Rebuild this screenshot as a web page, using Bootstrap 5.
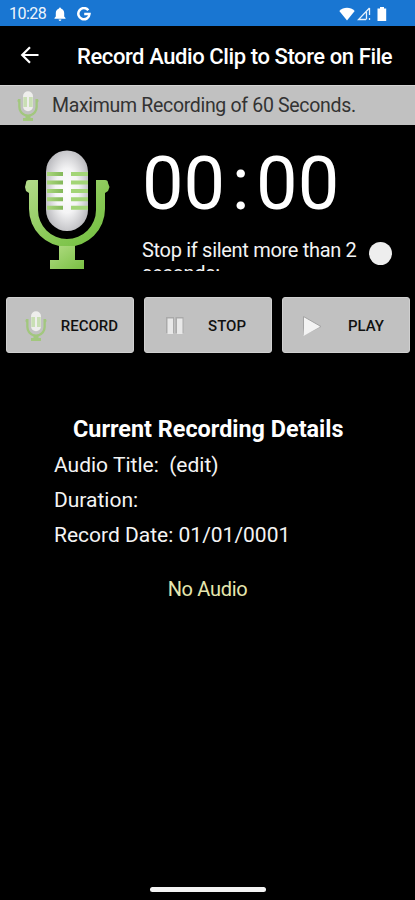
<!DOCTYPE html>
<html lang="en">
<head>
<meta charset="utf-8">
<meta name="viewport" content="width=device-width, initial-scale=1">
<title>Record Audio Clip</title>
<link href="https://cdn.jsdelivr.net/npm/bootstrap@5.3.0/dist/css/bootstrap.min.css" rel="stylesheet">
<style>
body{font-family:Roboto,"Liberation Sans",sans-serif;background:#000;color:#f4f4f4;height:900px;overflow:hidden;line-height:1.2}
svg{display:block;flex:none}
.statusbar{height:26px;background:#1976d2;font-size:16px;padding:2px 28px 0 9px;color:#eef5fc}
.clock{width:37px;letter-spacing:-.5px}
.toolbar{height:59px;padding-left:20px}
.toolbar h1{font-size:22px;font-weight:500;letter-spacing:-.41px;margin:3px 0 0 37px;white-space:nowrap;color:#fff}
.notice{height:40px;background:#c1c1c1;border-top:1px solid #d4d4d4;color:#333;font-size:19.5px;letter-spacing:-.32px;padding-left:17px}
.notice-text{padding:1px 0 0 13px}
.recorder{height:146px;padding:25px 0 0 25px}
.timer{font-size:74px;line-height:68px;height:66px;gap:6.5px;color:#fff;margin-left:3px}
.silent{font-size:20px;letter-spacing:-.31px;line-height:23px;height:32px;overflow:hidden;width:224px;margin:23px 0 0 3px}
.knob{width:23px;height:23px;background:#eee;margin:26px 0 0 3px}
.controls{padding:26px 5px 0 6px;gap:10px}
.controls .btn{flex:0 0 128px;height:56px;background:#c1c1c1;border:1px solid #d0d0d0;border-radius:3px;color:#111;font-size:15px;font-weight:500;padding:2px 15px 0 18px}
.controls .stop,.controls .play{padding-right:25px}
.details{padding:62px 0 0 54px;font-size:21px;line-height:34.8px}
.details h2{font-size:23.4px;font-weight:700;line-height:28px;margin:0 0 5px 19px;color:#fff}
.result{color:#e6e6ae;font-size:20px;letter-spacing:-.3px;line-height:24px;margin-top:25px}
.homebar{width:116px;height:5px;background:#f4f4f4;margin-bottom:8px}
</style>
</head>
<body class="d-flex flex-column">
<svg width="0" height="0" class="position-absolute" aria-hidden="true">
  <defs>
    <linearGradient id="green" x1="0" y1="0" x2="1" y2="1"><stop offset="0" stop-color="#b5dc8c"/><stop offset=".55" stop-color="#8ac957"/><stop offset="1" stop-color="#6fbd3c"/></linearGradient>
    <linearGradient id="foot" x1="0" y1="0" x2="1" y2="1"><stop offset="0" stop-color="#b2dc84"/><stop offset="1" stop-color="#79c043"/></linearGradient>
    <radialGradient id="silver" cx=".5" cy=".5" r=".55"><stop offset="0" stop-color="#fff"/><stop offset=".5" stop-color="#f4f4f5"/><stop offset="1" stop-color="#bcbcc0"/></radialGradient>
    <linearGradient id="bar" gradientUnits="userSpaceOnUse" x1="22" y1="0" x2="38" y2="0"><stop offset="0" stop-color="#a9d77b"/><stop offset="1" stop-color="#84b85a"/></linearGradient>
    <symbol id="mic" viewBox="0 0 86 120">
      <path fill="url(#green)" d="M4 30h9v30a29 29 0 0 0 58 0V30h9a3 3 0 0 1 3 3l1.500 4-1.500 4-3 2v16a38 38 0 0 1-76 0V43l-3-2-1-4 1-4a3 3 0 0 1 3-3z"/>
      <path fill="url(#foot)" d="M34 96h16v14h9v9H25v-9h9z"/>
      <rect x="21" y=".5" width="42" height="80.500" rx="21" fill="url(#silver)"/>
      <path fill="url(#bar)" d="M22 22h16v4H22zM22 30.500h16v4H22zM22 39h16v4H22zM22 47.300h16v4H22zM22 55.700h16v4H22z"/>
      <path fill="#a3d577" d="M46 22h17v4H46zM46 30.500h17v4H46zM46 39h17v4H46zM46 47.300h17v4H46zM46 55.700h17v4H46z"/>
    </symbol>
    <symbol id="mic-small" viewBox="0 0 22 30">
      <path fill="#a2c77e" d="M1 8h2.500v8a7.500 7.500 0 0 0 15 0V8H21l.6 2-.8 1.500V16a9.700 9.700 0 0 1-7.300 9.400V27h2.500v3H6v-3h2.500v-1.600A9.700 9.700 0 0 1 1.200 16v-4.500L.4 10z"/>
      <rect x="6" y=".3" width="10" height="20" rx="5" fill="#eeeeec"/>
      <path fill="#c9dfb4" d="M6.300 6h3.700v10H6.300zM12 6h3.700v10H12z"/>
    </symbol>
  </defs>
</svg>
<header>
  <div class="statusbar d-flex align-items-center">
    <span class="clock">10:28</span>
    <svg width="12" height="14" viewBox="0 0 12 14" style="margin-left:8px" fill="#fff"><path d="M5 1.500a1 1 0 0 1 2 0c2 .6 3.200 2.300 3.200 4.500v3.500L11.500 11v.8H.5V11l1.300-1.500V6C1.800 3.800 3 2.100 5 1.500zM4.600 12.500h2.800a1.400 1.400 0 0 1-2.800 0z"/></svg>
    <svg width="14" height="14" viewBox="0 0 14 14" style="margin-left:11px" fill="none" stroke="#fff" stroke-width="2.500"><path d="M11.300 3.200A5.600 5.600 0 1 0 12.500 7H7.200"/></svg>
    <svg width="16" height="14" viewBox="0 0 16 14" class="ms-auto" fill="#fff"><path d="M8 13.500.3 4C4.500-.3 11.500-.3 15.700 4z"/></svg>
    <svg width="14" height="14" viewBox="0 0 14 14" style="margin-left:2px" fill="none" stroke="#e8f2fc"><path d="M12.500 1 1.500 12.500H9M9.500 5v7.500M12.500 1v7M12.500 11v2" stroke-width="1.300"/></svg>
    <svg width="10" height="14" viewBox="0 0 10 14" style="margin-left:6px" fill="#fff"><path d="M3 0h4v1.500h2.200V14H.5V1.500H3z"/></svg>
  </div>
  <div class="toolbar d-flex align-items-center">
    <svg width="20" height="18" viewBox="0 0 20 18" fill="none" stroke="#fff" stroke-width="2.200" style="margin-top:-2px"><path d="M18.500 9H2.500M10 1.200 2.200 9l7.800 7.800"/></svg>
    <h1>Record Audio Clip to Store on File</h1>
  </div>
</header>
<div class="notice d-flex align-items-center">
  <svg width="22" height="30"><use href="#mic-small"/></svg><span class="notice-text">Maximum Recording of 60 Seconds.</span>
</div>
<main>
  <section class="recorder d-flex align-items-start">
    <svg width="86" height="120"><use href="#mic"/></svg>
    <div class="ms-4 ps-1 flex-grow-1">
      <div class="timer d-flex"><span>00</span><span>:</span><span>00</span></div>
      <div class="d-flex align-items-start">
        <div class="silent">Stop if silent more than 2 seconds:</div>
        <div class="knob rounded-circle"></div>
      </div>
    </div>
  </section>
  <div class="controls d-flex">
    <button class="btn d-flex align-items-center justify-content-between"><svg width="22" height="30"><use href="#mic-small"/></svg>RECORD</button>
    <button class="btn d-flex align-items-center justify-content-between stop"><svg width="22" height="20" viewBox="0 0 22 20"><path fill="#aaa" d="M3 1h8v16H3zM12.500 1h8v16h-8z"/><path fill="#e8e8e8" d="M4.500 2.500H10V18H4.500zM14 2.500h5.500V18H14z"/></svg>STOP</button>
    <button class="btn d-flex align-items-center justify-content-between play"><svg width="22" height="22" viewBox="0 0 22 22"><path fill="#f3f3f3" stroke="#a4a4a4" d="M2.500 1.500 20 11.500 2.500 20z"/><path fill="#f3f3f3" d="M3.500 5 18.500 12 2.500 21z"/></svg>PLAY</button>
  </div>
  <section class="details">
    <h2>Current Recording Details</h2>
    <div>Audio Title:&nbsp; (edit)</div>
    <div>Duration:</div>
    <div>Record Date: 01/01/0001</div>
  </section>
  <p class="result text-center mb-0">No Audio</p>
</main>
<div class="homebar rounded-pill mt-auto mx-auto"></div>
<script src="https://cdn.jsdelivr.net/npm/bootstrap@5.3.0/dist/js/bootstrap.bundle.min.js"></script>
</body>
</html>
